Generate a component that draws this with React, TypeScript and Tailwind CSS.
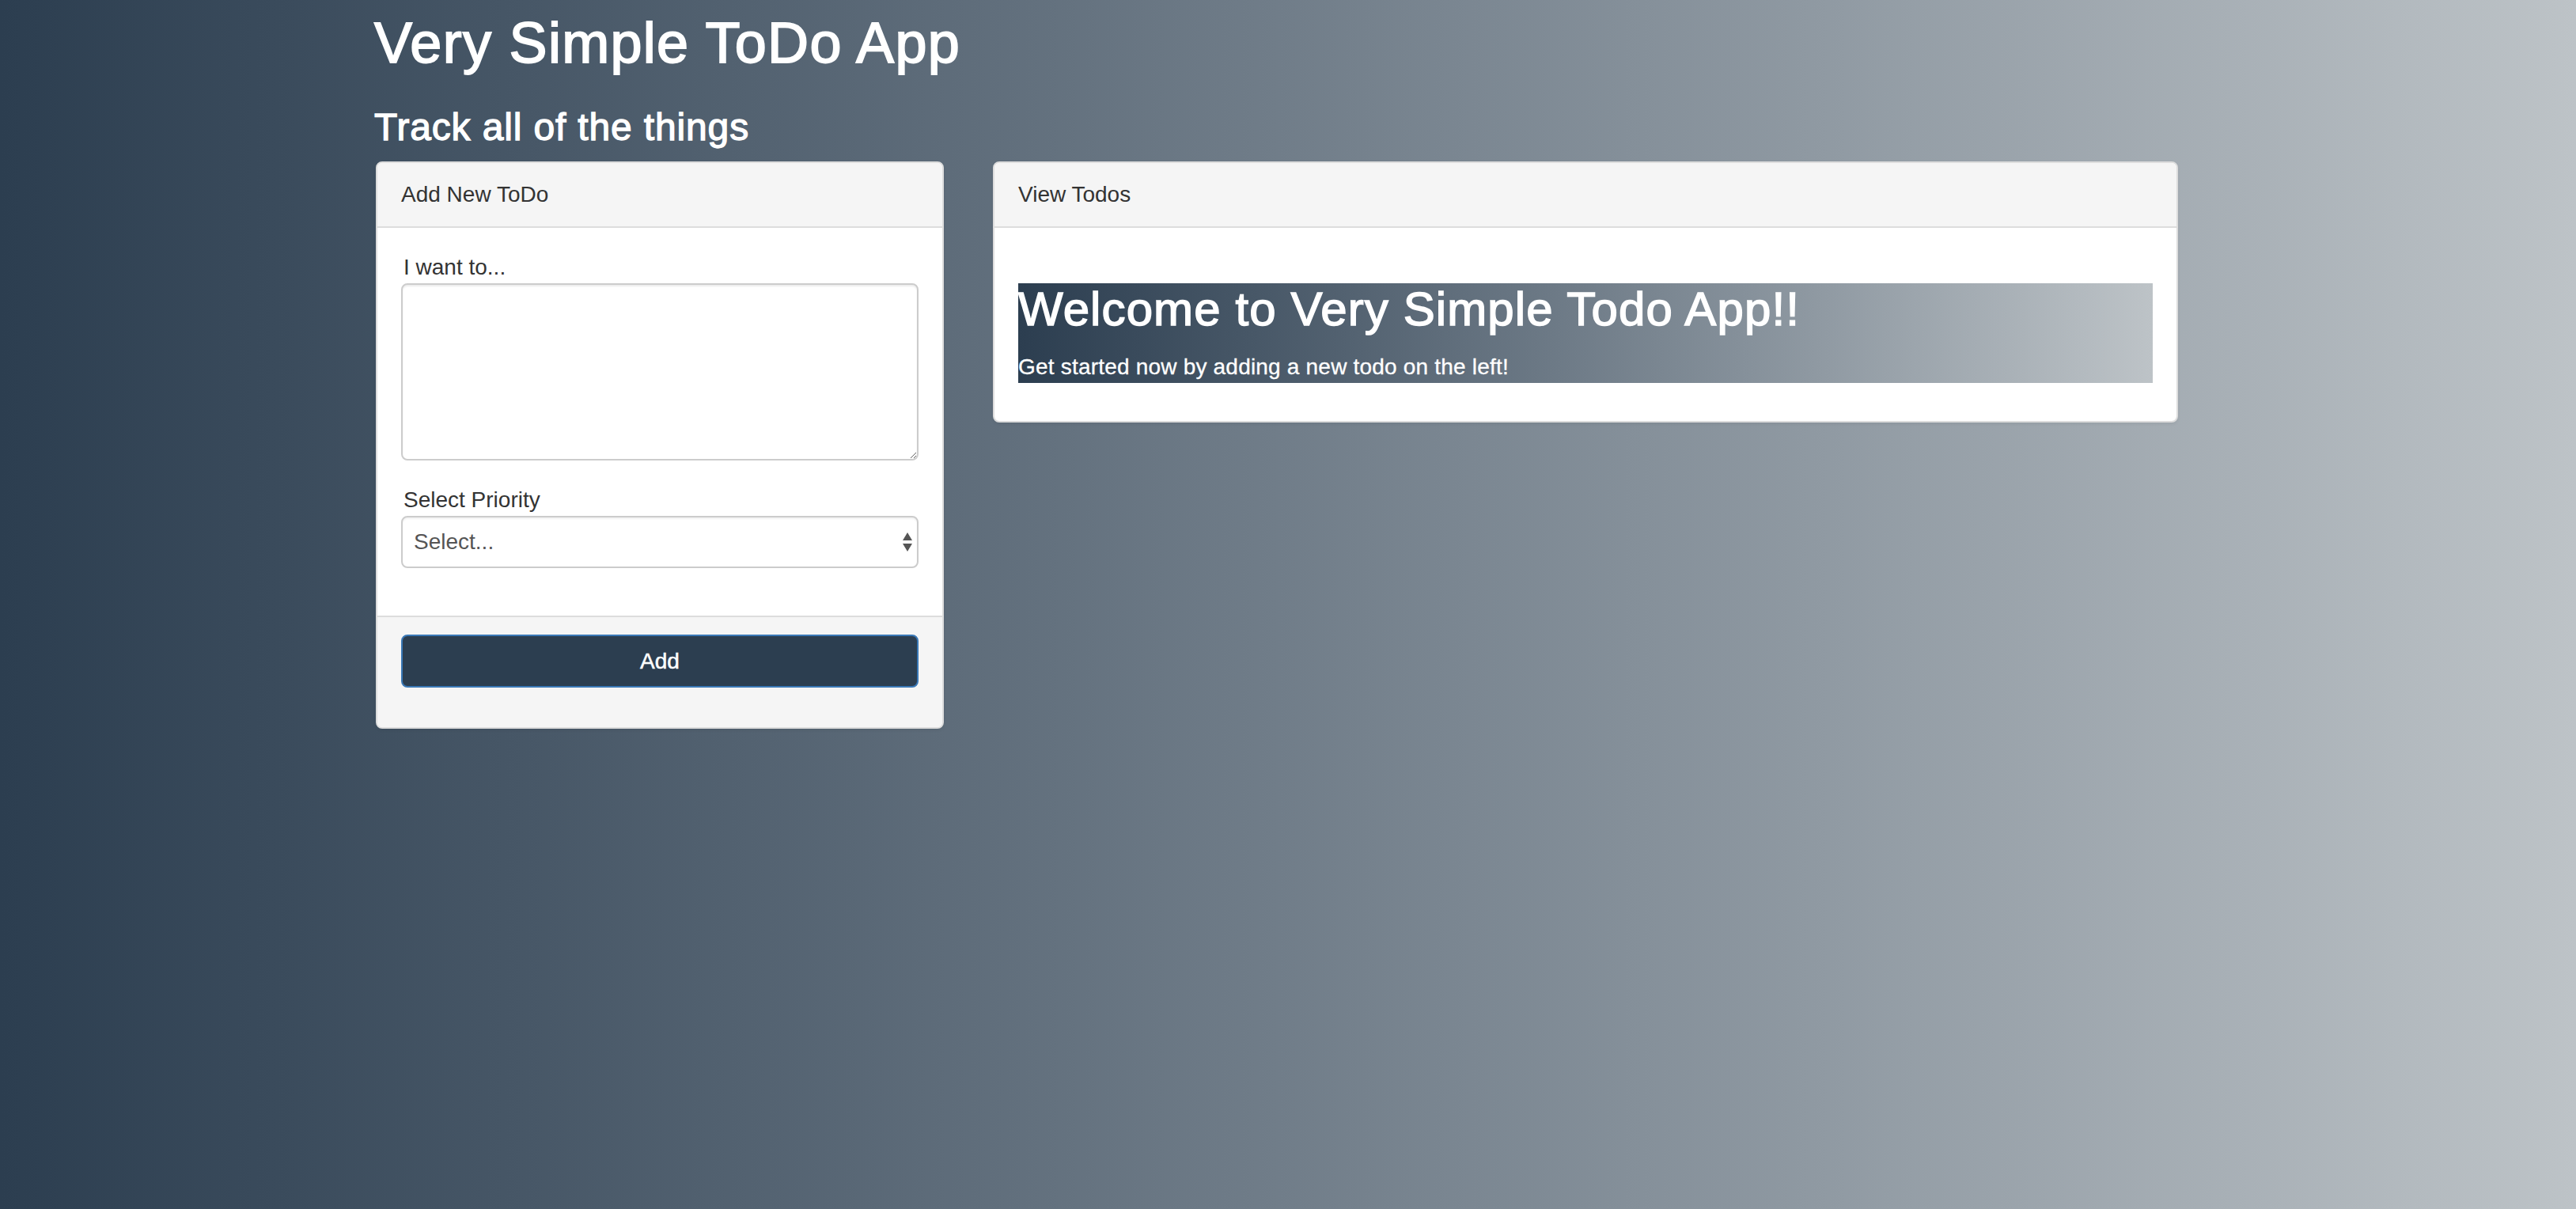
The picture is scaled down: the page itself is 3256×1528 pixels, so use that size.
const AddTodoPanel = () => {
	return (
		<div className="w-[718px] rounded-[8px] border-2 border-[#dddddd] bg-white shadow-[0_2px_4px_rgba(0,0,0,0.05)] overflow-hidden">
			<div className="border-b-2 border-[#dddddd] bg-[#f5f5f5] px-[30px] py-[20px] text-[28px] leading-[40px] text-[#333333]">
				Add New ToDo
			</div>
			<div className="p-[30px]">
				<div className="mb-[30px]">
					<label className="block pl-[3px] text-[28px] leading-[40px] text-[#333333]">
						I want to...
					</label>
					<textarea className="block h-[224px] w-full rounded-[8px] border-2 border-[#cccccc] bg-white px-[24px] py-[12px] text-[28px] text-[#555555] shadow-[inset_0_2px_2px_rgba(0,0,0,0.075)] outline-none" />
				</div>
				<div className="mb-[30px]">
					<label className="block pl-[3px] text-[28px] leading-[40px] text-[#333333]">
						Select Priority
					</label>
					<div className="relative">
						<select className="block h-[66px] w-full appearance-none rounded-[8px] border-2 border-[#cccccc] bg-white pl-[14px] pr-[40px] text-[28px] text-[#555555] shadow-[inset_0_2px_2px_rgba(0,0,0,0.05)] outline-none">
							<option>Select...</option>
							<option>Low</option>
							<option>Medium</option>
							<option>High</option>
						</select>
						<svg
							className="pointer-events-none absolute right-[8px] top-1/2 -translate-y-1/2"
							width="12"
							height="24"
							viewBox="0 0 12 24"
						>
							<polygon points="6,0 12,10 0,10" fill="#555555" />
							<polygon points="0,14 12,14 6,24" fill="#555555" />
						</svg>
					</div>
				</div>
			</div>
			<div className="border-t-2 border-[#dddddd] bg-[#f5f5f5] px-[30px] pt-[22px] pb-[50px]">
				<button
					type="button"
					className="flex h-[67px] w-full items-center justify-center rounded-[8px] border-2 border-[#3a78b6] bg-[#2c3e50] text-[28px] text-white [-webkit-text-stroke:0.5px_white]"
				>
					Add
				</button>
			</div>
		</div>
	);
};

const ViewTodosPanel = () => {
	return (
		<div className="w-[1498px] self-start rounded-[8px] border-2 border-[#dddddd] bg-white shadow-[0_2px_4px_rgba(0,0,0,0.05)] overflow-hidden">
			<div className="border-b-2 border-[#dddddd] bg-[#f5f5f5] px-[30px] py-[20px] text-[28px] leading-[40px] text-[#333333]">
				View Todos
			</div>
			<div className="p-[30px]">
				<div className="mt-[40px] mb-[18px] bg-gradient-to-r from-[#2c3e50] to-[#bdc3c7] text-white">
					<h2 className="text-[60px] leading-[66px] tracking-[1.1px] [-webkit-text-stroke:1.5px_white]">
						Welcome to Very Simple Todo App!!
					</h2>
					<p className="mt-[20px] text-[28px] leading-[40px] tracking-[0.2px] [-webkit-text-stroke:0.3px_white]">
						Get started now by adding a new todo on the left!
					</p>
				</div>
			</div>
		</div>
	);
};

export default function App() {
	return (
		<div className="min-h-screen w-full bg-gradient-to-r from-[#2c3e50] to-[#bdc3c7] [font-family:'Liberation_Sans',Arial,sans-serif]">
			<div className="ml-[475px] w-[2278px]">
				<h1 className="-ml-[2px] pt-[15px] text-[72px] leading-[79px] tracking-[1.3px] text-white [-webkit-text-stroke:1.8px_white]">
					Very Simple ToDo App
				</h1>
				<h3 className="-ml-[2px] mt-[40px] mb-[17px] text-[48px] leading-[53px] tracking-[0.85px] text-white [-webkit-text-stroke:1.3px_white]">
					Track all of the things
				</h3>
				<div className="flex items-start gap-[62px]">
					<AddTodoPanel />
					<ViewTodosPanel />
				</div>
			</div>
		</div>
	);
}
